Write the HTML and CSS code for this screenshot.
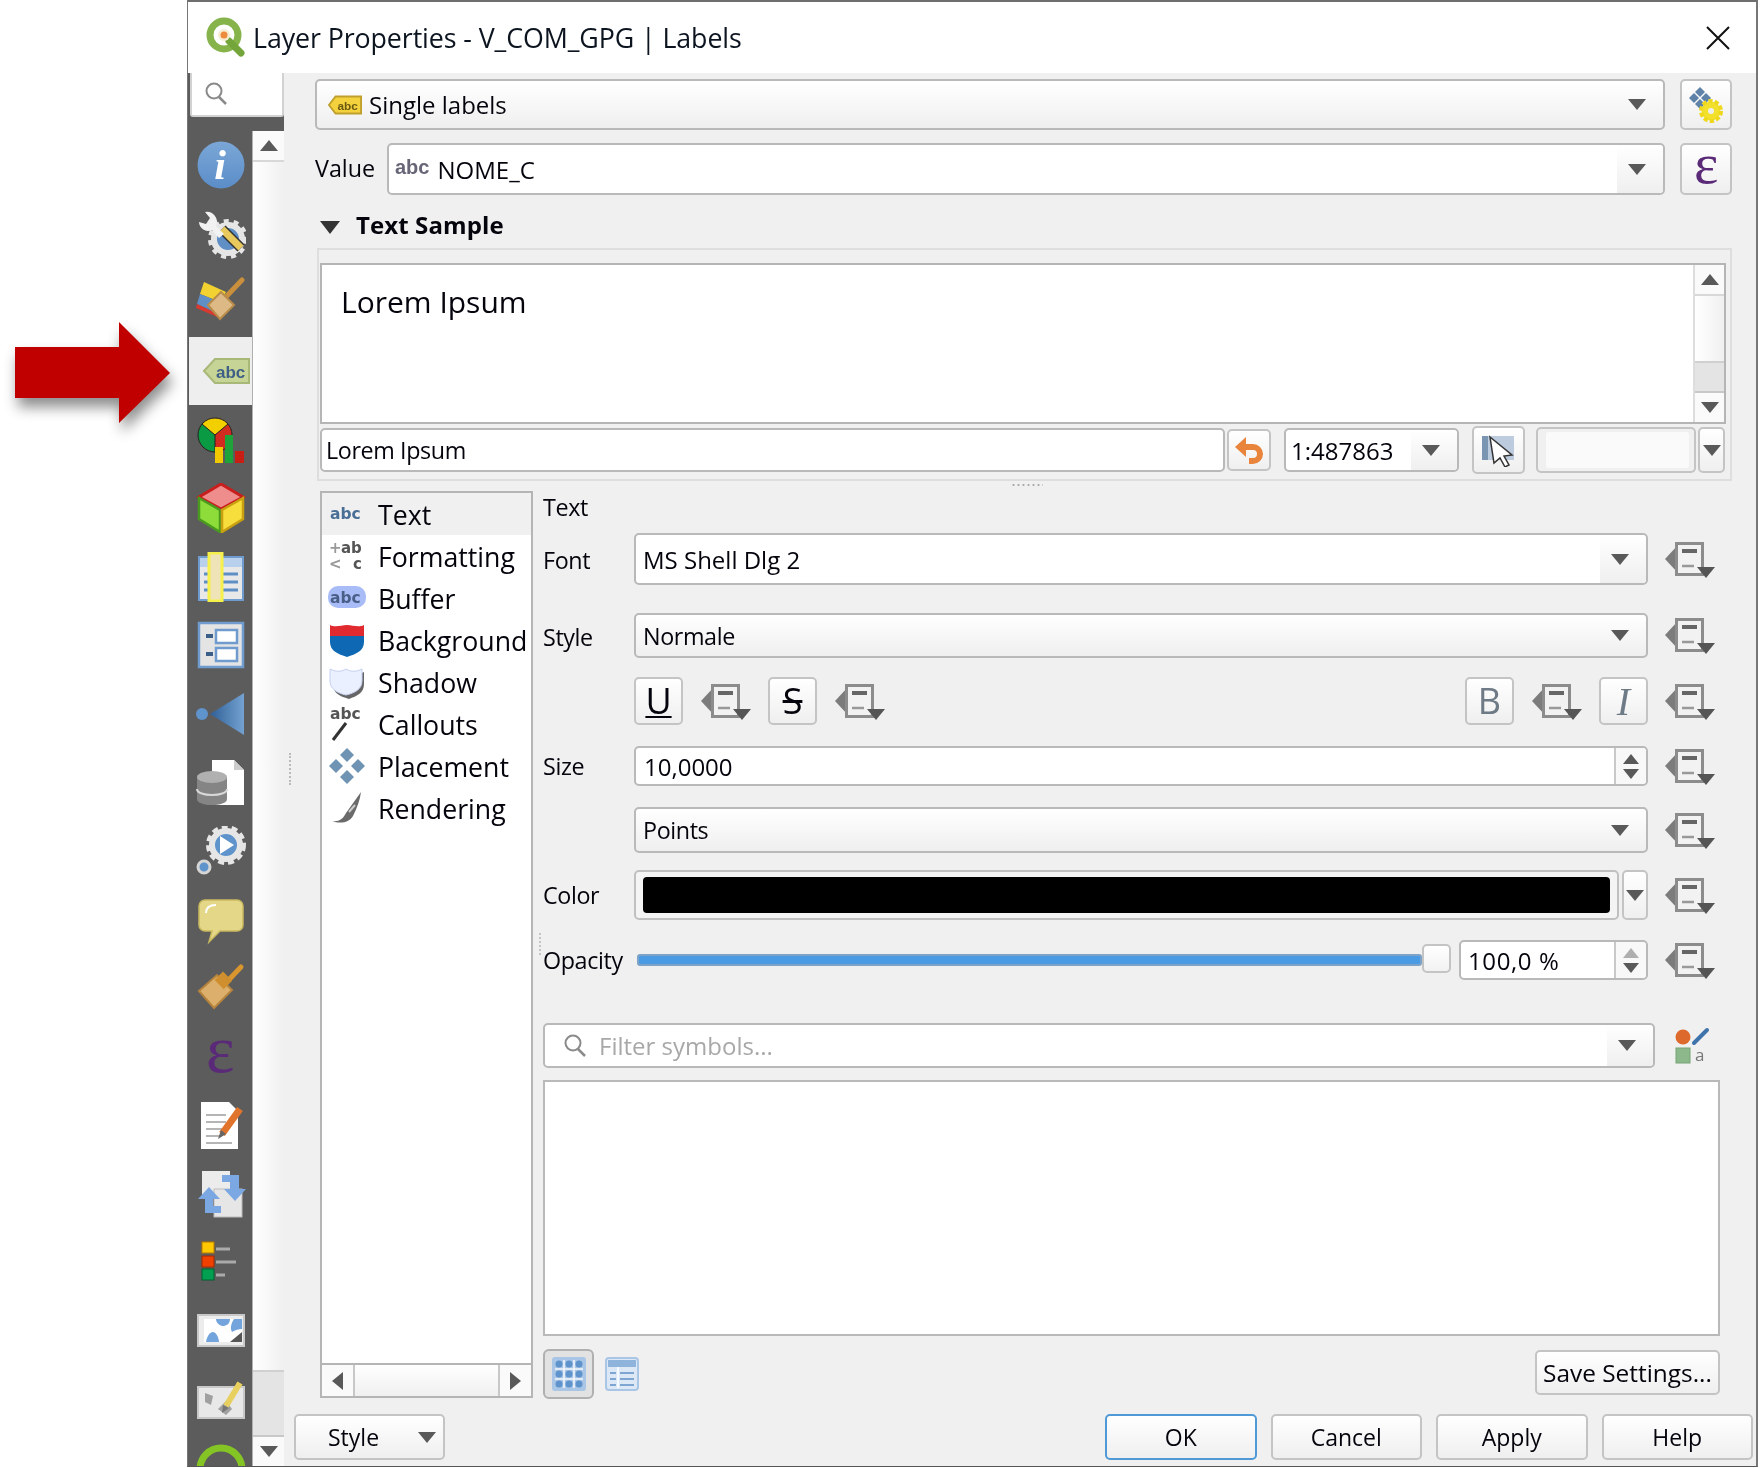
FILE: index.html
```html
<!DOCTYPE html>
<html lang="en">
<head>
<meta charset="utf-8">
<title>Layer Properties - V_COM_GPG | Labels</title>
<link rel="stylesheet" href="styles.css">
</head>
<body>
<svg class="defs" width="0" height="0" aria-hidden="true">
  <defs>
    <symbol id="dd" viewBox="0 0 50 38">
      <polygon points="0,17 13,3 13,31" fill="#7c7c7c"/>
      <rect x="11.5" y="1.5" width="26" height="31" fill="#f2f2f2" stroke="#8c8c8c" stroke-width="3"/>
      <path d="M17 9h15" stroke="#666" stroke-width="4"/>
      <path d="M17 24h12" stroke="#999" stroke-width="2.5"/>
      <polygon points="32,25 50,25 41,36" fill="#555"/>
    </symbol>
    <symbol id="down" viewBox="0 0 18 11"><polygon points="0,0 18,0 9,11" fill="#595959"/></symbol>
    <symbol id="up" viewBox="0 0 18 11"><polygon points="0,11 18,11 9,0" fill="#595959"/></symbol>
    <linearGradient id="blue" x1="0" y1="0" x2="0" y2="1"><stop offset="0" stop-color="#7ba7d7"/><stop offset="1" stop-color="#5b8dc8"/></linearGradient>
  </defs>
</svg>
<div class="page">
  <div class="gutter">
    <svg class="red-arrow" width="180" height="125" viewBox="0 0 180 125">
      <polygon points="15,30 119,30 119,5 170,56 119,106 119,81 15,81" fill="#c00000"/>
    </svg>
  </div>
  <div class="dialog">
    <header class="titlebar">
      <svg class="logo" width="40" height="40" viewBox="0 0 40 40">
        <circle cx="19" cy="18" r="14" fill="none" stroke="#86b34a" stroke-width="7"/>
        <path d="M24 24l12 12" stroke="#74a53a" stroke-width="7" stroke-linecap="round"/>
        <circle cx="19" cy="18" r="6" fill="#f6ecd0"/>
        <circle cx="19" cy="18" r="3.5" fill="#ee8a3c"/>
      </svg>
      <span class="title">Layer Properties - V_COM_GPG | Labels</span>
      <svg class="close" width="26" height="26" viewBox="0 0 26 26"><path d="M2 2l22 22M24 2L2 24" stroke="#111" stroke-width="2"/></svg>
    </header>
    <div class="body">
      <aside class="side">
        <div class="side-search">
          <svg width="26" height="26" viewBox="0 0 26 26"><circle cx="11" cy="10" r="7.5" fill="none" stroke="#8a8a8a" stroke-width="2"/><path d="M16 16l7 7" stroke="#8a8a8a" stroke-width="2.5"/></svg>
        </div>
        <div class="side-strip"></div>
        <div class="side-lower">
          <nav class="rail">
            <div class="rail-item"><svg width="50" height="50" viewBox="0 0 50 50"><circle cx="25" cy="25" r="23.5" fill="url(#blue)"/><text x="24" y="39" class="ic-i">i</text></svg></div>
            <div class="rail-item"><svg width="50" height="50" viewBox="0 0 50 50"><circle cx="32" cy="30" r="14" fill="#5f8fc4" stroke="#e6e6e6" stroke-width="6"/><circle cx="32" cy="30" r="18" fill="none" stroke="#e6e6e6" stroke-width="4" stroke-dasharray="5 5"/><path d="M26 20l19 19" stroke="#333" stroke-width="10"/><path d="M26 20l19 19" stroke="#e8c95e" stroke-width="7"/><path d="M3 13a9 9 0 0 0 13 8l7 8 5-4-8-8A10 10 0 0 0 9 3l5 6-4 6z" fill="#f2f2f2"/></svg></div>
            <div class="rail-item"><svg width="50" height="50" viewBox="0 0 50 50"><polygon points="8,5 30,15 24,25 4,17" fill="#f2d230"/><polygon points="4,17 24,25 18,35 1,27" fill="#5f8fc4"/><polygon points="1,27 18,35 26,42 0,31" fill="#d63a30"/><path d="M26 24l20-21" stroke="#c98f3c" stroke-width="5" stroke-linecap="round"/><polygon points="12,28 25,15 38,28 24,42" fill="#dcb985" stroke="#b98c4a" stroke-width="2"/></svg></div>
            <div class="rail-item selected"><svg width="50" height="50" viewBox="0 0 50 50"><polygon points="2,25 13,13 47,13 47,37 13,37" fill="#c6d595" stroke="#a7b878" stroke-width="2"/><text x="14" y="32" class="ic-abc">abc</text></svg></div>
            <div class="rail-item"><svg width="50" height="50" viewBox="0 0 50 50"><circle cx="19" cy="20" r="17" fill="#d22c20"/><path d="M19 20L6 9A17 17 0 0 0 19 37z" fill="#0a9a44"/><path d="M19 20L6 9A17 17 0 0 1 32 9z" fill="#f2d000"/><path d="M19 20V37M19 20L6 9M19 20L32 9" stroke="#222" stroke-width="1"/><circle cx="19" cy="20" r="17" fill="none" stroke="#222" stroke-width="1"/><rect x="19" y="32" width="8" height="16" fill="#f2c900"/><rect x="29" y="20" width="8" height="28" fill="#1ea33a"/><rect x="39" y="36" width="9" height="12" fill="#c81e14"/></svg></div>
            <div class="rail-item"><svg width="50" height="50" viewBox="0 0 50 50"><polygon points="25,1 47,14 25,26 3,14" fill="#ef8d8d" stroke="#c81e1e" stroke-width="3"/><polygon points="3,15 24,27 24,49 3,36" fill="#8ddc3a" stroke="#4a9a20" stroke-width="2.5"/><polygon points="47,15 26,27 26,49 47,36" fill="#f8de3c" stroke="#c9a010" stroke-width="2.5"/></svg></div>
            <div class="rail-item"><svg width="50" height="50" viewBox="0 0 50 50"><rect x="3" y="5" width="44" height="43" fill="#e8e8e8" stroke="#6f9bcf" stroke-width="2"/><rect x="4" y="6" width="42" height="9" fill="#b8d0ec"/><path d="M8 22h34M8 30h34M8 38h34" stroke="#5f8ec4" stroke-width="3"/><rect x="13" y="1" width="13" height="48" fill="#efe3b8" stroke="#f6f04a" stroke-width="3"/></svg></div>
            <div class="rail-item"><svg width="50" height="50" viewBox="0 0 50 50"><rect x="3" y="3" width="44" height="44" fill="#e4e4e4" stroke="#6f9bcf" stroke-width="2.5"/><rect x="20" y="10" width="21" height="13" fill="#fff" stroke="#6f9bcf" stroke-width="2.5"/><rect x="20" y="28" width="21" height="13" fill="#fff" stroke="#6f9bcf" stroke-width="2.5"/><path d="M10 16h7M10 34h7" stroke="#3c5f88" stroke-width="4"/></svg></div>
            <div class="rail-item"><svg width="50" height="50" viewBox="0 0 50 50"><circle cx="6" cy="25" r="6" fill="#5f93cc"/><defs><linearGradient id="jn" x1="0" x2="1" y1="0" y2="0"><stop offset="0" stop-color="#2f5f95"/><stop offset="1" stop-color="#74a2d2"/></linearGradient></defs><polygon points="14,25 48,4 48,46" fill="url(#jn)"/></svg></div>
            <div class="rail-item"><svg width="50" height="50" viewBox="0 0 50 50"><polygon points="16,2 38,2 48,12 48,47 16,47" fill="#fff"/><polygon points="38,2 48,12 38,12" fill="#ccc"/><path d="M1 19v22c0 8 30 8 30 0V19z" fill="#858585"/><ellipse cx="16" cy="19" rx="15" ry="6" fill="#b0b0b0"/><path d="M1 31c0 8 30 8 30 0" fill="none" stroke="#d8d8d8" stroke-width="2"/></svg></div>
            <div class="rail-item"><svg width="50" height="50" viewBox="0 0 50 50"><circle cx="30" cy="19" r="14" fill="#5f93cc" stroke="#e6e6e6" stroke-width="6"/><circle cx="30" cy="19" r="18" fill="none" stroke="#e6e6e6" stroke-width="4" stroke-dasharray="6 4"/><polygon points="24,10 24,28 38,19" fill="#fff"/><circle cx="8" cy="41" r="6" fill="#5f93cc" stroke="#d5d5d5" stroke-width="3"/></svg></div>
            <div class="rail-item"><svg width="50" height="50" viewBox="0 0 50 50"><path d="M9 5h32a6 6 0 0 1 6 6v19a6 6 0 0 1-6 6H24L13 47l3-11H9a6 6 0 0 1-6-6V11a6 6 0 0 1 6-6z" fill="#e4d787" stroke="#c9b95f" stroke-width="1.5"/><path d="M10 18c0-5 3-8 10-8" fill="none" stroke="#fff" stroke-width="2"/></svg></div>
            <div class="rail-item"><svg width="50" height="50" viewBox="0 0 50 50"><path d="M26 24L45 4" stroke="#d9962f" stroke-width="5" stroke-linecap="round"/><polygon points="3,28 21,12 36,27 18,45" fill="#dcb06c" stroke="#b5833c" stroke-width="2"/><rect x="21" y="11" width="13" height="12" transform="rotate(45 27 17)" fill="#d08f2e"/></svg></div>
            <div class="rail-item"><svg class="open-svg" width="50" height="50" viewBox="0 0 50 50"><text x="24" y="40" class="ic-eps">ε</text></svg></div>
            <div class="rail-item"><svg width="50" height="50" viewBox="0 0 50 50"><polygon points="5,1 33,1 42,10 42,48 5,48" fill="#fff"/><path d="M10 14h20M10 21h20M10 28h18M10 35h14M10 42h26" stroke="#b5b5b5" stroke-width="2"/><path d="M26 33L44 8" stroke="#e0742c" stroke-width="7"/><polygon points="22,38 25,29 30,33" fill="#666"/></svg></div>
            <div class="rail-item"><svg width="50" height="50" viewBox="0 0 50 50"><rect x="6" y="2" width="28" height="28" fill="#ececec"/><rect x="18" y="20" width="28" height="28" fill="#e6e6e6" stroke="#bbb"/><path d="M26 6h17v14h7l-11 12-11-12h6v-7h-8z" fill="#7ba7e2"/><path d="M25 44H9V30H2l11-12 11 12h-7v7h8z" fill="#7ba7e2"/></svg></div>
            <div class="rail-item"><svg width="50" height="50" viewBox="0 0 50 50"><rect x="6" y="4" width="12" height="11" fill="#ffc800" stroke="#b87a00"/><rect x="6" y="18" width="12" height="11" fill="#f04000" stroke="#a02800"/><rect x="6" y="31" width="12" height="11" fill="#00a050" stroke="#006030"/><path d="M20 11h14M20 24h20M20 37h9" stroke="#aaa" stroke-width="3"/></svg></div>
            <div class="rail-item"><svg width="50" height="50" viewBox="0 0 50 50"><rect x="2" y="9" width="46" height="31" fill="#ececec" stroke="#c8c8c8" stroke-width="2"/><rect x="8" y="13" width="38" height="23" fill="#fff"/><path d="M20 13h14c0 5-4 7-7 7s-7-3-7-7zM10 36c1-6 4-10 7-10 3 0 6 6 6 10z" fill="#74a4dc"/><path d="M36 26c3-2 7-3 10-3v-10h-8c-3 5-4 9-2 13z" fill="#74a4dc"/><polygon points="46,26 46,36 34,36" fill="#555"/></svg></div>
            <div class="rail-item"><svg width="50" height="50" viewBox="0 0 50 50"><rect x="2" y="12" width="46" height="31" fill="#e8e8e8" stroke="#c8c8c8" stroke-width="2"/><path d="M9 18l8 3-2 9-6-3zM22 34l8-8 6 8-6 6z" fill="#a0a0a0"/><path d="M30 31L44 8" stroke="#e8d060" stroke-width="6"/><polygon points="26,38 27,30 33,33" fill="#777"/></svg></div>
            <div class="rail-item"><svg width="50" height="50" viewBox="0 0 50 50"><circle cx="25" cy="25" r="21" fill="none" stroke="#84c425" stroke-width="7"/></svg></div>
          </nav>
          <div class="side-scroll">
            <div class="v-btn"><svg width="18" height="11"><use href="#up"/></svg></div>
            <div class="v-track"></div>
            <div class="v-thumb"></div>
            <div class="v-btn bottom"><svg width="18" height="11"><use href="#down"/></svg></div>
          </div>
        </div>
      </aside>
      <main class="main">
        <div class="grip-v"></div>
        <div class="content">
          <div class="row row-mode">
            <div class="combo grow">
              <svg width="34" height="22" viewBox="0 0 36 22"><polygon points="1,11 8,2 35,2 35,20 8,20" fill="#f4d23e" stroke="#bfa02c" stroke-width="2"/><text x="10" y="16" class="ic-abc-sm">abc</text></svg>
              <span class="combo-text wide">Single labels</span>
              <svg class="caret" width="18" height="11"><use href="#down"/></svg>
            </div>
            <button class="tool">
              <svg width="38" height="38" viewBox="0 0 38 38"><g fill="#5f83a8"><polygon points="13,1 18,6 13,11 8,6"/><polygon points="7,7 12,12 7,17 2,12"/><polygon points="19,7 24,12 19,17 14,12"/><polygon points="13,13 18,18 13,23 8,18"/></g><circle cx="24" cy="25" r="9.5" fill="#f2e02c" stroke="#efd81c" stroke-width="5" stroke-dasharray="4 2"/><circle cx="24" cy="25" r="8" fill="#f2e02c"/><circle cx="24" cy="25" r="3" fill="#eee"/></svg>
            </button>
          </div>
          <div class="row row-value">
            <label class="value-label">Value</label>
            <div class="combo edit grow">
              <span class="abc-mark">abc</span>
              <span class="combo-text wide">NOME_C</span>
              <span class="combo-drop"><svg width="18" height="11"><use href="#down"/></svg></span>
            </div>
            <button class="tool epsilon">ε</button>
          </div>
          <div class="collapse-head">
            <svg width="20" height="13" viewBox="0 0 20 13"><polygon points="0,0 20,0 10,13" fill="#333"/></svg>
            <strong>Text Sample</strong>
          </div>
          <section class="sample">
            <div class="preview">
              <div class="preview-text">Lorem Ipsum</div>
              <div class="pv-scroll">
                <div class="v-btn"><svg width="18" height="11"><use href="#up"/></svg></div>
                <div class="v-track"></div>
                <div class="v-thumb small"></div>
                <div class="v-btn bottom"><svg width="18" height="11"><use href="#down"/></svg></div>
              </div>
            </div>
            <div class="sample-row">
              <div class="input sample-input">Lorem Ipsum</div>
              <button class="tool undo"><svg width="32" height="32" viewBox="0 0 32 32"><polygon points="13,3 13,23 2,13" fill="#e8843c"/><path d="M11 13h9a7 7 0 0 1 0 14h-4" fill="none" stroke="#e8843c" stroke-width="6"/></svg></button>
              <div class="combo edit scale">
                <span class="combo-text wide">1:487863</span>
                <span class="combo-drop"><svg width="18" height="11"><use href="#down"/></svg></span>
              </div>
              <button class="tool pick"><svg width="36" height="34" viewBox="0 0 36 34"><rect x="1" y="3" width="32" height="24" fill="#bccbdd"/><rect x="1" y="3" width="6" height="24" fill="#7a95b2"/><polygon points="9,4 31,22 23,23 28,32 24,34 19,25 13,30" fill="#fff" stroke="#333" stroke-width="1.5"/></svg></button>
              <div class="color-wrap">
                <div class="color-small"><span></span></div>
                <div class="color-arrow"><svg width="18" height="11"><use href="#down"/></svg></div>
              </div>
            </div>
          </section>
          <div class="grip-h"></div>
          <div class="panes">
            <div class="grip-o"></div>
            <div class="list">
              <ul class="items">
                <li class="item active"><svg class="item-ic" width="36" height="36" viewBox="0 0 36 36"><text x="1" y="23" class="ic-list" fill="#4a6f96">abc</text></svg>Text</li>
                <li class="item"><svg class="item-ic" width="36" height="36" viewBox="0 0 36 36"><text x="0" y="15" class="ic-sm" fill="#999">+</text><text x="12" y="15" class="ic-sm" fill="#555">ab</text><text x="0" y="31" class="ic-sm" fill="#999">&lt;</text><text x="24" y="31" class="ic-sm" fill="#555">c</text></svg>Formatting</li>
                <li class="item"><svg class="item-ic" width="36" height="36" viewBox="0 0 36 36"><rect x="-1" y="6" width="38" height="22" rx="10" fill="#a8bcf8"/><text x="1" y="23" class="ic-list" fill="#4a5f86">abc</text></svg>Buffer</li>
                <li class="item"><svg class="item-ic" width="36" height="36" viewBox="0 0 36 36"><path d="M1 8c6 3 11 3 17 0 6 3 11 3 17 0v12c0 9-8 12-17 15C9 32 1 29 1 20z" fill="#0f68b4"/><path d="M1 3c6 3 11 0 17 0s11 3 17 0v11H1z" fill="#e02a30"/></svg>Background</li>
                <li class="item"><svg class="item-ic" width="36" height="36" viewBox="0 0 36 36"><path d="M4 8c5 3 10 3 16 0 5 3 9 3 15 0v12c0 9-7 12-15 15C10 32 4 29 4 20z" fill="#666"/><path d="M1 5c6 3 11 3 16 0 5 3 10 3 16 0v12c0 8-7 12-16 14C8 29 1 25 1 17z" fill="#eaf0ff" stroke="#c5d0f0"/></svg>Shadow</li>
                <li class="item"><svg class="item-ic" width="36" height="36" viewBox="0 0 36 36"><text x="1" y="13" class="ic-list" fill="#555">abc</text><path d="M17 17L4 34" stroke="#333" stroke-width="3"/></svg>Callouts</li>
                <li class="item"><svg class="item-ic" width="36" height="36" viewBox="0 0 36 36"><g fill="#6f93b3"><polygon points="18,0 25,7 18,14 11,7"/><polygon points="18,22 25,29 18,36 11,29"/><polygon points="7,11 14,18 7,25 0,18"/><polygon points="29,11 36,18 29,25 22,18"/></g></svg>Placement</li>
                <li class="item"><svg class="item-ic" width="36" height="36" viewBox="0 0 36 36"><path d="M3 31c7 1 11-2 14-8l15-21c-1 8-4 16-8 24-4 7-13 8-21 5z" fill="#6a6a6a"/><path d="M20 22l6-7" stroke="#ccc" stroke-width="2"/></svg>Rendering</li>
              </ul>
              <div class="h-scroll">
                <div class="h-btn"><svg width="11" height="18" viewBox="0 0 11 18"><polygon points="11,0 11,18 0,9" fill="#595959"/></svg></div>
                <div class="h-track"></div>
                <div class="h-btn"><svg width="11" height="18" viewBox="0 0 11 18"><polygon points="0,0 0,18 11,9" fill="#595959"/></svg></div>
              </div>
            </div>
            <div class="form">
              <div class="f-row r-head"><label class="f-label">Text</label></div>
              <div class="f-row r-font">
                <label class="f-label nudge">Font</label>
                <div class="combo edit f-ctl"><span class="combo-text wide">MS Shell Dlg 2</span><span class="combo-drop"><svg width="18" height="11"><use href="#down"/></svg></span></div>
                <svg class="dd"><use href="#dd"/></svg>
              </div>
              <div class="f-row r-style">
                <label class="f-label nudge">Style</label>
                <div class="combo f-ctl"><span class="combo-text">Normale</span><svg class="caret" width="18" height="11"><use href="#down"/></svg></div>
                <svg class="dd"><use href="#dd"/></svg>
              </div>
              <div class="f-row r-toggles">
                <div class="f-label"></div>
                <div class="toggles">
                  <button class="tog u">U</button>
                  <svg class="dd"><use href="#dd"/></svg>
                  <button class="tog s">S</button>
                  <svg class="dd"><use href="#dd"/></svg>
                  <span class="spacer"></span>
                  <button class="tog b">B</button>
                  <svg class="dd"><use href="#dd"/></svg>
                  <button class="tog i">I</button>
                </div>
                <svg class="dd"><use href="#dd"/></svg>
              </div>
              <div class="f-row r-size">
                <label class="f-label">Size</label>
                <div class="input spin f-ctl"><span class="spin-text wide">10,0000</span><span class="spin-btns"><svg width="18" height="11"><use href="#up"/></svg><svg width="18" height="11"><use href="#down"/></svg></span></div>
                <svg class="dd"><use href="#dd"/></svg>
              </div>
              <div class="f-row r-units">
                <div class="f-label"></div>
                <div class="combo f-ctl"><span class="combo-text">Points</span><svg class="caret" width="18" height="11"><use href="#down"/></svg></div>
                <svg class="dd"><use href="#dd"/></svg>
              </div>
              <div class="f-row r-color">
                <label class="f-label">Color</label>
                <div class="color-ctl f-ctl">
                  <div class="color-btn"><span></span></div>
                  <div class="color-arrow"><svg width="18" height="11"><use href="#down"/></svg></div>
                </div>
                <svg class="dd"><use href="#dd"/></svg>
              </div>
              <div class="f-row r-opacity">
                <label class="f-label">Opacity</label>
                <div class="opacity f-ctl">
                  <div class="slider"><div class="slider-fill"></div><div class="slider-thumb"></div></div>
                  <div class="input spin op-spin"><span class="spin-text wide pct">100,0 %</span><span class="spin-btns"><svg class="dim" width="18" height="11"><use href="#up"/></svg><svg width="18" height="11"><use href="#down"/></svg></span></div>
                </div>
                <svg class="dd"><use href="#dd"/></svg>
              </div>
              <div class="f-row r-filter">
                <div class="combo edit filter">
                  <svg width="26" height="26" viewBox="0 0 26 26"><circle cx="11" cy="10" r="7.5" fill="none" stroke="#8a8a8a" stroke-width="2"/><path d="M16 16l7 7" stroke="#8a8a8a" stroke-width="2.5"/></svg>
                  <span class="placeholder">Filter symbols...</span>
                  <span class="combo-drop"><svg width="18" height="11"><use href="#down"/></svg></span>
                </div>
                <svg class="sym-ic" width="34" height="36" viewBox="0 0 34 36"><circle cx="8" cy="9" r="7.5" fill="#dd6a2c"/><path d="M19 15L32 2" stroke="#3f73ac" stroke-width="4" stroke-linecap="round"/><rect x="1" y="20" width="14" height="15" fill="#8cb88c" stroke="#74a474"/><text x="20" y="33" class="ic-a">a</text></svg>
              </div>
              <div class="symbols"></div>
              <div class="f-row r-bottom">
                <button class="view on"><svg width="34" height="34" viewBox="0 0 34 34"><rect width="34" height="34" rx="3" fill="#a9c6e6"/><g fill="#5f93cc"><circle cx="7" cy="7" r="3.5"/><circle cx="17" cy="7" r="3.5"/><circle cx="27" cy="7" r="3.5"/><circle cx="7" cy="17" r="3.5"/><circle cx="17" cy="17" r="3.5"/><circle cx="27" cy="17" r="3.5"/><circle cx="7" cy="27" r="3.5"/><circle cx="17" cy="27" r="3.5"/><circle cx="27" cy="27" r="3.5"/></g><path d="M3 12h28M3 22h28M12 3v28M22 3v28" stroke="#f3f7fc" stroke-width="1.6"/></svg></button>
                <button class="view"><svg width="34" height="34" viewBox="0 0 34 34"><rect x="1" y="1" width="32" height="32" rx="3" fill="#dce8f5" stroke="#a9c6e6" stroke-width="2"/><rect x="3" y="3" width="28" height="7" fill="#8fb4dc"/><path d="M5 16h6M15 16h14M5 22h6M15 22h14M5 28h6M15 28h14" stroke="#7fa6d2" stroke-width="2"/><path d="M13 10v21" stroke="#fff" stroke-width="1.5"/></svg></button>
                <span class="spacer"></span>
                <button class="btn save">Save Settings...</button>
              </div>
            </div>
          </div>
        </div>
        <footer class="footer">
          <button class="btn style-btn"><span>Style</span><svg width="18" height="11"><use href="#down"/></svg></button>
          <span class="spacer"></span>
          <button class="btn act default">OK</button>
          <button class="btn act">Cancel</button>
          <button class="btn act">Apply</button>
          <button class="btn act">Help</button>
        </footer>
      </main>
    </div>
  </div>
</div>
</body>
</html>
```
FILE: styles.css
```css
* { box-sizing: border-box; }
html, body { margin: 0; padding: 0; background: #fff; }
body { font-family: "Open Sans", "Noto Sans", sans-serif; font-size: 23.3px; letter-spacing: -.38px; color: #04040c; }
.defs { position: absolute; }
ul { list-style: none; margin: 0; padding: 0; }
button { font: inherit; letter-spacing: inherit; color: inherit; cursor: default; padding: 0; }
.spacer { flex: 1; }
.wide { font-size: 24px; letter-spacing: 0; }

.page { display: flex; width: 1761px; height: 1468px; overflow: hidden; }
.gutter { width: 187px; flex: none; padding-top: 317px; }
.red-arrow { display: block; filter: drop-shadow(3px 9px 7px rgba(0,0,0,.45)); }

.dialog { width: 1571px; height: 1467px; flex: none; display: flex; flex-direction: column; background: #f0f0f0; border-top: 2px solid #6e6e6e; border-left: 1px solid #777; border-bottom: 1px solid #555; border-right: 2px solid #777; filter: blur(.45px); }
.titlebar { height: 71px; flex: none; background: #fff; display: flex; align-items: center; padding: 0 25px 0 17px; }
.logo { flex: none; margin-top: -1px; }
.title { margin-left: 8px; font-size: 26.8px; letter-spacing: -.1px; color: #0c1420; flex: 1; }

.body { flex: 1; display: flex; min-height: 0; }

.side { width: 96px; flex: none; display: flex; flex-direction: column; background: #5c5c5c; }
.side-search { height: 44px; flex: none; margin-left: 2px; background: #fff; border: 2px solid #d2d2d2; border-top: 0; border-radius: 0 0 3px 3px; display: flex; align-items: center; padding-left: 11px; }
.side-strip { height: 14px; flex: none; }
.side-lower { flex: 1; display: flex; min-height: 0; }
.rail { width: 65px; flex: none; overflow: hidden; border-right: 1px solid #b0b0b0; }
.rail-item { height: 68.6px; display: flex; align-items: center; justify-content: center; padding-left: 2px; }
.rail-item.selected { background: #eee; margin-left: 1px; padding: 0; justify-content: flex-end; }
.open-svg { overflow: visible; }
.ic-i { font: italic bold 42px "Liberation Serif", serif; fill: #fff; text-anchor: middle; }
.ic-abc { font: bold 17px "Liberation Sans", sans-serif; letter-spacing: 0; fill: #3f5f86; }
.ic-abc-sm { font: bold 12.5px "Liberation Sans", sans-serif; letter-spacing: 0; fill: #6b5a10; }
.ic-eps { font: 68px "Liberation Serif", serif; fill: #5a2a78; text-anchor: middle; }
.ic-list { font: bold 15.5px "DejaVu Sans", sans-serif; letter-spacing: 0; }
.ic-sm { font: bold 15px "DejaVu Sans", sans-serif; letter-spacing: 0; }
.ic-a { font: 17px "Open Sans", sans-serif; letter-spacing: 0; fill: #777; }

.side-scroll, .pv-scroll { flex: none; width: 31px; display: flex; flex-direction: column; background: #f0f0f0; }
.side-scroll { background: linear-gradient(90deg, #fff, #f0f0f0); }
.v-btn { height: 31px; flex: none; display: flex; align-items: center; justify-content: center; border-bottom: 2px solid #d8d8d8; background: #fafafa; }
.v-btn.bottom { border-bottom: 0; border-top: 2px solid #c8c8c8; background: #fafafa; }
.v-track { flex: 1; background: linear-gradient(90deg, #fff, #f0f0f0); }
.v-thumb { height: 65px; flex: none; background: #e4e4e4; border-top: 2px solid #d0d0d0; }
.v-thumb.small { height: 30px; }

.main { flex: 1; min-width: 0; display: flex; flex-direction: column; position: relative; }
.grip-v { position: absolute; left: 5px; top: 680px; height: 32px; width: 2px; border-left: 2px dotted #bbb; }
.content { flex: 1; min-height: 0; padding-left: 31px; display: flex; flex-direction: column; }
.row { display: flex; flex: none; }
.grow { flex: 1; }
.row-mode { margin-top: 6px; height: 51px; width: 1417px; gap: 15px; }
.row-value { margin-top: 13px; height: 52px; width: 1417px; align-items: stretch; }

.combo { display: flex; align-items: center; border: 2px solid #b9b9b9; border-radius: 5px; background: linear-gradient(#fff, #efefef); padding-left: 7px; min-width: 0; }
.combo-text { flex: 1; white-space: nowrap; }
.combo svg { flex: none; }
.row-mode .combo { padding-left: 11px; }
.row-mode .combo-text { margin-left: 7px; }
.caret { margin-right: 17px; }
.combo.edit { background: #fff; padding-right: 0; }
.combo-drop { align-self: stretch; width: 46px; flex: none; display: flex; align-items: center; justify-content: center; padding-right: 6px; background: linear-gradient(#fff, #efefef); border-radius: 0 4px 4px 0; }
.tool { width: 52px; flex: none; display: flex; align-items: center; justify-content: center; border: 2px solid #c4c4c4; border-radius: 5px; background: linear-gradient(#fff, #efefef); }
.value-label { width: 72px; flex: none; align-self: center; margin-top: -2px; letter-spacing: 0; }
.abc-mark { font: bold 20px "Liberation Sans", sans-serif; letter-spacing: 0; color: #667; margin-right: 8px; margin-top: -4px; margin-left: -1px; }
.epsilon { margin-left: 15px; font: 58px/40px "Liberation Serif", serif; color: #5a2a78; padding-bottom: 10px; }

.collapse-head { margin-top: 14px; height: 30px; margin-bottom: 3px; flex: none; display: flex; align-items: center; gap: 16px; padding-left: 5px; }
.collapse-head svg { margin-top: 6px; }
.collapse-head strong { font-weight: 700; font-size: 24px; letter-spacing: .1px; }

.sample { margin: 6px 0 0 2px; width: 1415px; height: 233px; flex: none; border: 2px solid #dedede; padding: 13px 4px 6px 1px; }
.preview { height: 161px; display: flex; background: #fff; border: 2px solid #b5b5b5; }
.preview-text { flex: 1; padding: 16px 0 0 19px; font-size: 30px; letter-spacing: 0; }
.pv-scroll { border-left: 2px solid #ddd; }
.sample-row { display: flex; margin-top: 4px; height: 44px; align-items: center; }
.input { background: #fff; border: 2px solid #b9b9b9; border-radius: 5px; display: flex; align-items: center; }
.sample-input { width: 905px; height: 44px; padding-left: 4px; }
.undo { width: 44px; height: 42px; margin-left: 2px; }
.scale { width: 175px; height: 44px; margin-left: 13px; padding-left: 5px; }
.pick { width: 53px; height: 48px; margin-left: 13px; }
.color-wrap { margin-left: 11px; display: flex; gap: 2px; height: 46px; width: 189px; }
.color-small { flex: 1; border: 2px solid #c4c4c4; border-radius: 5px; background: #f0f0f0; padding: 3px 5px; }
.color-small span { display: block; height: 100%; background: #fafafa; margin: 0 0 0 3px; border-radius: 3px; }
.color-arrow { width: 27px; flex: none; border: 2px solid #c4c4c4; border-radius: 5px; display: flex; align-items: center; justify-content: center; background: linear-gradient(#fff, #efefef); }

.grip-h { flex: none; margin: 0 0 0 696px; width: 32px; height: 10px; background: radial-gradient(circle, #aaa 1px, transparent 1.2px) 0 2px / 5px 4px; background-clip: content-box; padding: 2px 0 3px; }

.panes { flex: 1; min-height: 0; display: flex; padding-left: 5px; position: relative; }
.grip-o { position: absolute; left: 224px; top: 442px; height: 22px; width: 2px; border-left: 2px dotted #c4c4c4; }
.list { width: 213px; height: 907px; flex: none; display: flex; flex-direction: column; background: #fff; border: 2px solid #b5b5b5; }
.items { flex: 1; }
.item { height: 42px; display: flex; align-items: center; font-size: 26.7px; letter-spacing: 0; white-space: nowrap; padding-left: 7px; }
.item.active { background: #f0f0f0; }
.item-ic { width: 36px; margin-right: 13px; flex: none; overflow: visible; }
.h-scroll { height: 33px; flex: none; display: flex; border-top: 2px solid #b5b5b5; }
.h-btn { width: 31px; flex: none; display: flex; align-items: center; justify-content: center; background: #fafafa; }
.h-track { flex: 1; background: linear-gradient(#fff, #f0f0f0); border-left: 2px solid #c8c8c8; border-right: 2px solid #c8c8c8; }

.form { margin-left: 10px; width: 1189px; display: flex; flex-direction: column; }
.f-row { display: flex; align-items: center; flex: none; }
.f-label { width: 91px; flex: none; }
.nudge { padding-top: 2px; }
.f-ctl { width: 1014px; flex: none; align-self: stretch; }
.dd { width: 50px; height: 38px; flex: none; margin-left: 17px; margin-top: 3px; }
.r-head { height: 42px; align-items: flex-start; }
.r-font { height: 52px; }
.r-style { height: 45px; margin-top: 28px; }
.r-toggles { height: 48px; margin-top: 19px; }
.r-size { height: 40px; margin-top: 21px; }
.r-units { height: 46px; margin-top: 21px; }
.r-color { height: 50px; margin-top: 17px; }
.r-opacity { height: 40px; margin-top: 20px; }
.r-filter { height: 45px; margin-top: 43px; }
.r-bottom { height: 50px; margin-top: 13px; width: 1177px; }

.toggles { width: 1014px; flex: none; display: flex; align-items: center; }
.toggles .dd { margin-left: 18px; margin-right: 17px; }
.toggles .tog.s + .dd { margin-right: 0; }
.tog { width: 49px; height: 48px; flex: none; border: 2px solid #c4c4c4; border-radius: 5px; background: linear-gradient(#fff, #efefef); font-size: 36px; letter-spacing: 0; line-height: 1; display: flex; align-items: center; justify-content: center; }
.tog.u { text-decoration: underline; text-decoration-thickness: 2px; text-underline-offset: 2px; }
.tog.s { text-decoration: line-through; text-decoration-thickness: 2.5px; }
.tog.b { color: #6e7a86; }
.tog.i { color: #6e7a86; font: italic 40px "Liberation Serif", serif; }

.spin { padding-left: 8px; }
.spin-text { flex: 1; }
.pct { letter-spacing: .6px; }
.spin-btns { width: 32px; align-self: stretch; flex: none; border-left: 2px solid #c8c8c8; display: flex; flex-direction: column; align-items: center; justify-content: center; gap: 5px; background: #f8f8f8; border-radius: 0 4px 4px 0; }
.spin-btns svg { width: 16px; height: 10px; }
.dim { opacity: .45; }

.color-ctl { display: flex; gap: 3px; }
.color-btn { flex: 1; border: 2px solid #c0c0c0; border-radius: 5px; background: #f4f4f4; padding: 5px 7px; }
.color-btn span { display: block; height: 100%; background: #000; border-radius: 4px; }
.color-ctl .color-arrow { width: 26px; }

.opacity { display: flex; align-items: center; padding-left: 3px; gap: 8px; }
.slider { flex: 1; height: 30px; display: flex; align-items: center; }
.slider-fill { flex: 1; height: 12px; background: #4a9be4; border: 2px solid #7ea3c6; border-radius: 3px; }
.slider-thumb { width: 29px; height: 29px; flex: none; background: linear-gradient(#fff, #f2f2f2); border: 2px solid #c4c4c4; border-radius: 5px; margin-top: -3px; }
.op-spin { width: 189px; flex: none; height: 40px; padding-left: 7px; }

.filter { width: 1112px; height: 45px; padding-left: 17px; flex: none; }
.placeholder { flex: 1; color: #a8a8a8; margin-left: 11px; font-size: 24px; letter-spacing: 0; }
.sym-ic { margin-left: 20px; flex: none; overflow: visible; }

.symbols { width: 1177px; height: 256px; flex: none; margin-top: 12px; background: #fff; border: 2px solid #b9b9b9; }
.view { width: 51px; height: 50px; flex: none; border: 2px solid transparent; border-radius: 6px; background: none; display: flex; align-items: center; justify-content: center; }
.view.on { background: #e2e2e2; border-color: #b0b0b0; }
.view + .view { margin-left: 2px; }
.btn { border: 2px solid #c4c4c4; border-radius: 5px; background: linear-gradient(#fff, #efefef); letter-spacing: 0; }
.save { width: 185px; height: 45px; font-size: 24.4px; margin-top: -3px; }

.footer { height: 46px; flex: none; display: flex; gap: 14px; margin: 0 3px 6px 10px; font-size: 23px; }
.style-btn { width: 151px; display: flex; align-items: center; justify-content: space-between; padding: 0 7px 0 32px; }
.act { width: 151.5px; }
.default { border-color: #4f9ad6; }
```
